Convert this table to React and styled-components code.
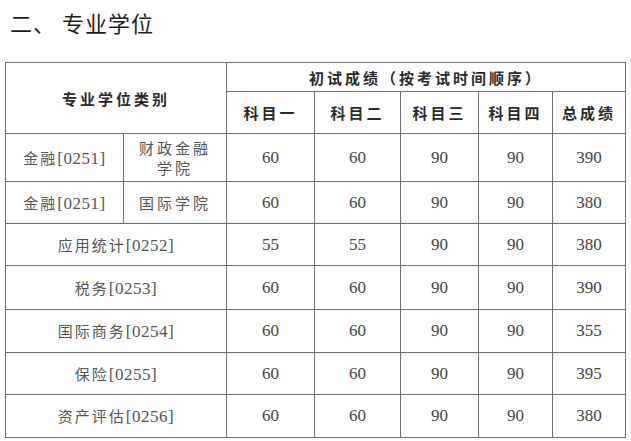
import React from "react";
import styled, { createGlobalStyle } from "styled-components";

const GlobalStyle = createGlobalStyle`
  body {
    margin: 0;
    background: #ffffff;
  }
`;

const columns = [118, 103, 88, 86, 78, 74, 73];
const subjects = ["科目一", "科目二", "科目三", "科目四", "总成绩"];

const rows = [
  { name: "金融", code: "[0251]", school: "财政金融学院", scores: [60, 60, 90, 90, 390], height: 48 },
  { name: "金融", code: "[0251]", school: "国际学院", scores: [60, 60, 90, 90, 380], height: 42 },
  { name: "应用统计", code: "[0252]", scores: [55, 55, 90, 90, 380], height: 42 },
  { name: "税务", code: "[0253]", scores: [60, 60, 90, 90, 390], height: 44 },
  { name: "国际商务", code: "[0254]", scores: [60, 60, 90, 90, 355], height: 43 },
  { name: "保险", code: "[0255]", scores: [60, 60, 90, 90, 395], height: 42 },
  { name: "资产评估", code: "[0256]", scores: [60, 60, 90, 90, 380], height: 43 },
];

const App = () => {
  return (
    <Page>
      <GlobalStyle />
      <Title>二、 专业学位</Title>
      <Table>
        <colgroup>
          {columns.map((w, i) => (
            <col key={i} style={{ width: w }} />
          ))}
        </colgroup>
        <thead>
          <Row $height={29}>
            <HeadCell colSpan={2} rowSpan={2}>
              专业学位类别
            </HeadCell>
            <HeadCell colSpan={5}>初试成绩（按考试时间顺序）</HeadCell>
          </Row>
          <Row $height={42}>
            {subjects.map((s) => (
              <HeadCell key={s}>{s}</HeadCell>
            ))}
          </Row>
        </thead>
        <tbody>
          {rows.map((row, i) => (
            <Row key={i} $height={row.height}>
              <NameCell colSpan={row.school ? 1 : 2}>
                {row.name}
                <Code>{row.code}</Code>
              </NameCell>
              {row.school && (
                <SchoolCell>
                  {row.school.length > 4 ? (
                    <>
                      {row.school.slice(0, 4)}
                      <br />
                      {row.school.slice(4)}
                    </>
                  ) : (
                    row.school
                  )}
                </SchoolCell>
              )}
              {row.scores.map((v, j) => (
                <NumCell key={j}>{v}</NumCell>
              ))}
            </Row>
          ))}
        </tbody>
      </Table>
    </Page>
  );
};

const Page = styled.div`
  width: 631px;
  height: 441px;
  padding: 7px 0 0 5px;
  box-sizing: border-box;
  overflow: hidden;
`;

const Title = styled.h2`
  margin: 0 0 25px 5px;
  height: 30px;
  line-height: 30px;
  font-family: "Noto Sans CJK SC", sans-serif;
  font-size: 22px;
  font-weight: 400;
  letter-spacing: 1px;
  color: #1e1e1e;
`;

const Table = styled.table`
  border-collapse: collapse;
  table-layout: fixed;
  width: 621px;
  border: 1px solid #6e6e6e;
`;

const Row = styled.tr`
  height: ${(p) => p.$height}px;
`;

const Cell = styled.td`
  border: 1px solid #6e6e6e;
  padding: 0;
  text-align: center;
  vertical-align: middle;
`;

const HeadCell = styled(Cell).attrs({ as: "th" })`
  font-family: "Noto Sans CJK SC", sans-serif;
  font-size: 15px;
  font-weight: 700;
  letter-spacing: 3px;
  color: #2a2a2a;
`;

const NameCell = styled(Cell)`
  font-family: "Noto Sans CJK SC", sans-serif;
  font-size: 15px;
  font-weight: 400;
  letter-spacing: 2px;
  color: #555555;
`;

const Code = styled.span`
  font-family: "Liberation Serif", "Times New Roman", serif;
  font-size: 17px;
  letter-spacing: 0.5px;
`;

const SchoolCell = styled(NameCell)`
  line-height: 20px;
  letter-spacing: 3px;
`;

const NumCell = styled(Cell)`
  font-family: "Liberation Serif", "Times New Roman", serif;
  font-size: 17px;
  color: #444444;
`;

export default App;
